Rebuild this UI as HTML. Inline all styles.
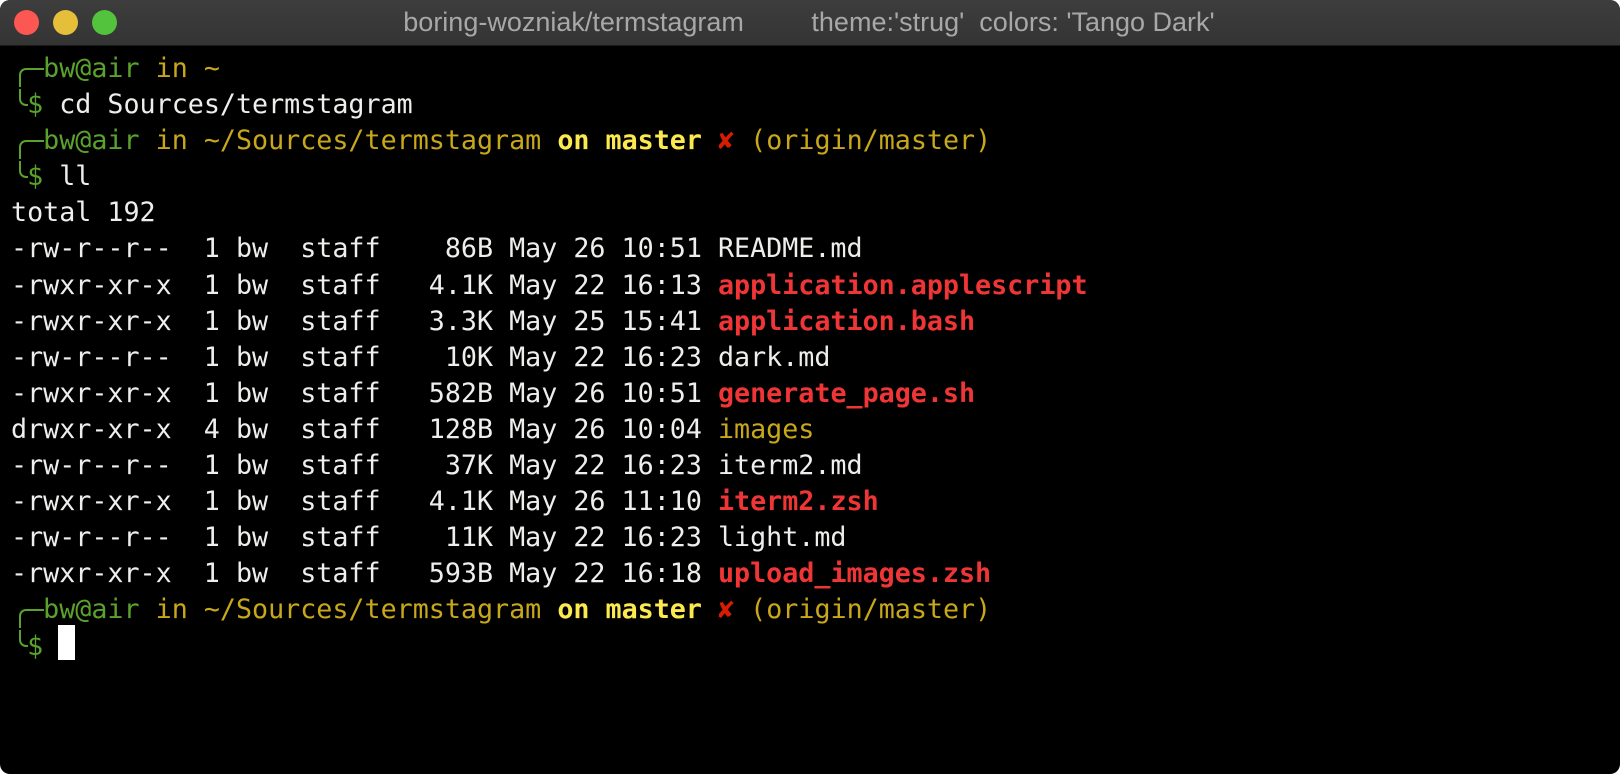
<!DOCTYPE html>
<html><head><meta charset="utf-8"><style>
html,body{margin:0;padding:0;background:#fff;width:1620px;height:774px;overflow:hidden}
.win{position:absolute;left:0;top:0;width:1620px;height:774px;background:#000;border-radius:10px;overflow:hidden}
.tb{position:absolute;left:0;top:0;width:1620px;height:45px;background:linear-gradient(#3d3d3d,#343434);border-bottom:1px solid #1a1a1a}
.dot{position:absolute;top:10px;width:25px;height:25px;border-radius:50%}
.title{position:absolute;left:209px;width:1200px;top:7px;text-align:center;color:#a8a8a8;font:27px "Liberation Sans",sans-serif;white-space:pre}
pre{position:absolute;left:11px;top:51px;margin:0;font:26.7px/36.09px "DejaVu Sans Mono","Liberation Mono",monospace;color:#eeeeec}
.g{color:#5aa22c}.y{color:#c8a81a}.Y{color:#fce94f;font-weight:bold}.r{color:#d81c00;font-weight:bold}.R{color:#ef3535;font-weight:bold}
.bt{position:absolute;left:19px;width:23px;height:17px;border-left:2px solid #5aa22c;border-top:2px solid #5aa22c;border-top-left-radius:7px}
.bb{position:absolute;left:19px;width:7px;height:15px;border-left:2px solid #5aa22c;border-bottom:2px solid #5aa22c;border-bottom-left-radius:7px}
.cur{position:absolute;left:58px;top:625px;width:17px;height:35px;background:#fff}
</style></head><body><div class="win">
<div class="tb">
<div class="dot" style="left:14px;background:#fc5753"></div>
<div class="dot" style="left:53px;background:#e6bf3a"></div>
<div class="dot" style="left:92px;background:#53c23c"></div>
<div class="title">boring-wozniak/termstagram         theme:'strug'  colors: 'Tango Dark'</div>
</div>
<div class="bt" style="top:68px"></div><div class="bb" style="top:89px"></div>
<div class="bt" style="top:140px"></div><div class="bb" style="top:161px"></div>
<div class="bt" style="top:609px"></div><div class="bb" style="top:630px"></div>
<pre>  <span class="g">bw@air</span> <span class="y">in ~</span>
 <span class="g">$</span> cd Sources/termstagram
  <span class="g">bw@air</span> <span class="y">in ~/Sources/termstagram</span> <span class="Y">on master</span> <span class="r">✘</span> <span class="y">(origin/master)</span>
 <span class="g">$</span> ll
total 192
-rw-r--r--  1 bw  staff    86B May 26 10:51 README.md
-rwxr-xr-x  1 bw  staff   4.1K May 22 16:13 <span class="R">application.applescript</span>
-rwxr-xr-x  1 bw  staff   3.3K May 25 15:41 <span class="R">application.bash</span>
-rw-r--r--  1 bw  staff    10K May 22 16:23 dark.md
-rwxr-xr-x  1 bw  staff   582B May 26 10:51 <span class="R">generate_page.sh</span>
drwxr-xr-x  4 bw  staff   128B May 26 10:04 <span class="y">images</span>
-rw-r--r--  1 bw  staff    37K May 22 16:23 iterm2.md
-rwxr-xr-x  1 bw  staff   4.1K May 26 11:10 <span class="R">iterm2.zsh</span>
-rw-r--r--  1 bw  staff    11K May 22 16:23 light.md
-rwxr-xr-x  1 bw  staff   593B May 22 16:18 <span class="R">upload_images.zsh</span>
  <span class="g">bw@air</span> <span class="y">in ~/Sources/termstagram</span> <span class="Y">on master</span> <span class="r">✘</span> <span class="y">(origin/master)</span>
 <span class="g">$</span></pre>
<div class="cur"></div>
</div></body></html>
